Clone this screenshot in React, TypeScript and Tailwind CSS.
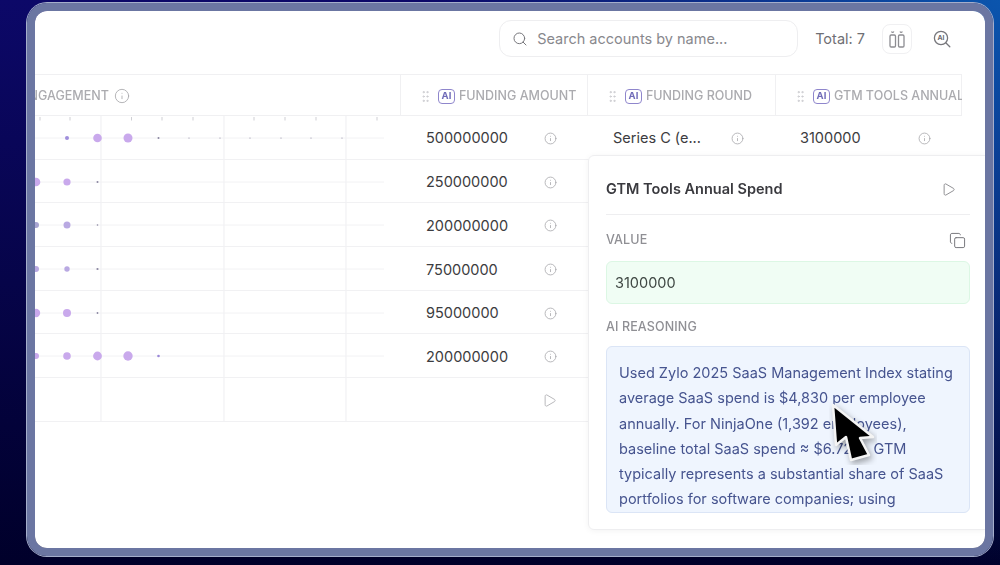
import React from 'react';
import { Search, Info, Play, Copy, GripVertical } from 'lucide-react';

type Dot = { x: number; r: number; c?: string };

const PURPLE = '#c9a9ec';
const LAVENDER = '#b9a9e2';
const DARK = '#8a86a0';

// x positions are measured from the left edge of the engagement column
const rows: { dots: Dot[]; value: string; extra?: boolean }[] = [
  {
    value: '500000000',
    extra: true,
    dots: [
      { x: 32, r: 2, c: '#a08fdc' },
      { x: 62.5, r: 4.3 },
      { x: 93, r: 4.5 },
      { x: 123.5, r: 1, c: DARK },
      { x: 154, r: 0.6, c: DARK },
      { x: 185, r: 0.6, c: DARK },
      { x: 215, r: 0.6, c: DARK },
      { x: 246, r: 0.6, c: DARK },
      { x: 276, r: 0.6, c: DARK },
      { x: 307, r: 0.6, c: DARK },
    ],
  },
  {
    value: '250000000',
    dots: [
      { x: 1, r: 4.3 },
      { x: 32, r: 3.6 },
      { x: 62.5, r: 1, c: DARK },
    ],
  },
  {
    value: '200000000',
    dots: [
      { x: 1, r: 3, c: '#a9a5d2' },
      { x: 32, r: 3.5, c: LAVENDER },
      { x: 62.5, r: 0.8, c: DARK },
    ],
  },
  {
    value: '75000000',
    dots: [
      { x: 1, r: 3, c: LAVENDER },
      { x: 32, r: 2.7, c: LAVENDER },
      { x: 62.5, r: 1.1, c: DARK },
    ],
  },
  {
    value: '95000000',
    dots: [
      { x: 1, r: 4.2 },
      { x: 32, r: 4 },
      { x: 62.5, r: 0.9, c: DARK },
    ],
  },
  {
    value: '200000000',
    dots: [
      { x: 1, r: 3 },
      { x: 32, r: 3.8 },
      { x: 62.5, r: 4.4 },
      { x: 93, r: 4.7 },
      { x: 123.5, r: 1.3, c: '#9a88d8' },
    ],
  },
];

const ticks = [5, 35, 96.5, 127, 158, 219, 250, 281, 342];

const GridLines = ({ line = true }: { line?: boolean }) => (
  <>
    {line && <line x1="0" y1="22" x2="349" y2="22" stroke="#f2f2f4" />}
    {[66, 189, 311].map((x) => (
      <line key={x} x1={x} y1="0" x2={x} y2="44" stroke="#f1f1f3" strokeWidth="1.2" />
    ))}
  </>
);

const Chart = ({ dots, showTicks }: { dots: Dot[]; showTicks?: boolean }) => (
  <svg width="365" height="43" viewBox="0 0 365 43" className="shrink-0">
    <GridLines />
    {showTicks &&
      ticks.map((x) => <line key={x} x1={x} y1="1" x2={x} y2="4.5" stroke="#cfcfd4" />)}
    {dots.map((d) => (
      <circle key={d.x} cx={d.x} cy="22" r={d.r} fill={d.c ?? PURPLE} />
    ))}
  </svg>
);

const AiBadge = () => (
  <span className="flex h-[15px] w-[17px] shrink-0 items-center justify-center rounded-[4px] border border-[#8f86cc] text-[9.5px] font-bold leading-none text-[#6f6ab8]">
    AI
  </span>
);

const HeaderCell = ({ label, className }: { label: string; className: string }) => (
  <div className={`flex h-full items-center overflow-hidden border-l border-[#f0f0f2] pl-[17px] pt-[2px] ${className}`}>
    <GripVertical size={15} strokeWidth={1.5} className="mr-[5px] shrink-0 text-[#c9c9cd]" />
    <AiBadge />
    <span className="ml-1 whitespace-nowrap text-[12.5px] font-medium text-[#ababaf]">
      {label}
    </span>
  </div>
);

const ValueCell = ({ value, className }: { value: string; className: string }) => (
  <div className={`flex items-center pt-[2px] ${className}`}>
    <span className="w-[118px] whitespace-nowrap text-[14.5px] text-[#3c3c40]">{value}</span>
    <Info size={13} strokeWidth={1.5} className="text-[#a9a9ad]" />
  </div>
);

const ColumnsIcon = () => (
  <svg width="16" height="18" viewBox="0 0 16 18" fill="none" stroke="#8d8d92" strokeWidth="1.3">
    <rect x="1" y="5" width="5.5" height="12" rx="1.2" />
    <rect x="9.5" y="5" width="5.5" height="12" rx="1.2" />
    <path d="M2.5 1.5c.6 1.2 1.6 1.2 2.4 0M11 1.5c.6 1.2 1.6 1.2 2.4 0" />
  </svg>
);

const AiSearchIcon = () => (
  <svg width="18" height="18" viewBox="0 0 18 18" fill="none" stroke="#77777c" strokeWidth="1.3">
    <circle cx="8" cy="8" r="6.6" />
    <path d="M13 13l3.8 3.8" strokeLinecap="round" />
    <text x="8" y="10.4" textAnchor="middle" fontSize="6.8" fontWeight="700" stroke="none" fill="#6a6a70" fontFamily="Inter, sans-serif">
      AI
    </text>
  </svg>
);

const Cursor = () => (
  <svg width="48" height="64" viewBox="-4 -4 48 64" className="blur-[0.7px]">
    <polygon
      points="0,0 3,40 13,32 18,55 36,50 27,33 40,32"
      fill="#000"
      stroke="#f4f4f4"
      strokeWidth="2.5"
      strokeLinejoin="round"
      className="drop-shadow-[2px_3px_3px_rgba(0,0,0,0.35)]"
    />
  </svg>
);

export default function App() {
  return (
    <div className="h-[565px] w-[1000px] overflow-hidden bg-[radial-gradient(circle_at_100%_0%,#0b55ad_0%,rgba(11,85,173,0)_50%),linear-gradient(180deg,#0c0868,#00002a)] pl-[27px] pt-[3px] font-['Inter',sans-serif]">
      <div className="h-[553px] w-[966px] rounded-[20px] border-[8px] border-[#6b76a2] shadow-[0_0_0_1px_#a5aecb]">
        <div className="relative h-full overflow-hidden rounded-[12px] bg-white blur-[0.35px]">
          {/* Toolbar */}
          <div className="flex h-[63px] items-center justify-end pb-[8px] pr-[34px]">
            <div className="mr-[17px] flex h-[37px] w-[299px] items-center gap-[9px] rounded-[12px] border border-[#eeeef0] pl-[12px]">
              <Search size={16} strokeWidth={1.5} className="text-[#77777c]" />
              <span className="text-[14.5px] text-[#88888d]">Search accounts by name...</span>
            </div>
            <span className="mr-[17px] text-[14.5px] text-[#6f6f74]">Total: 7</span>
            <div className="mr-[21px] flex h-[30px] w-[30px] items-center justify-center rounded-[8px] border border-[#f0f0f2]">
              <ColumnsIcon />
            </div>
            <AiSearchIcon />
          </div>

          {/* Table */}
          <div className="w-[927px]">
            <div className="box-content flex h-[40px] items-center border-y border-r border-[#f0f0f2]">
              <div className="flex w-[365px] shrink-0 items-center overflow-hidden pt-[2px]">
                <span className="-ml-[14px] whitespace-nowrap text-[12.5px] font-medium text-[#ababaf]">
                  ENGAGEMENT
                </span>
                <Info size={16} strokeWidth={1.3} className="ml-[5px] text-[#a9a9ad]" />
              </div>
              <HeaderCell label="FUNDING AMOUNT" className="w-[187px] shrink-0" />
              <HeaderCell label="FUNDING ROUND" className="w-[188px] shrink-0" />
              <HeaderCell label="GTM TOOLS ANNUAL..." className="w-[187px] shrink-0" />
            </div>
            {rows.map((r, i) => (
              <div key={i} className="flex h-[43.7px] items-center border-b border-[#f1f1f3]">
                <Chart dots={r.dots} showTicks={i === 0} />
                <ValueCell value={r.value} className="w-[187px] shrink-0 pl-[26px]" />
                {r.extra && (
                  <>
                    <ValueCell value="Series C (e..." className="w-[188px] shrink-0 pl-[26px]" />
                    <ValueCell value="3100000" className="w-[187px] shrink-0 pl-[25px]" />
                  </>
                )}
              </div>
            ))}
            <div className="flex h-[43.7px] items-center border-b border-[#f1f1f3]">
              <svg width="365" height="43" viewBox="0 0 365 43" className="shrink-0">
                <GridLines line={false} />
              </svg>
              <div className="w-[187px] shrink-0 pl-[142px] pt-[2px]">
                <Play size={15} strokeWidth={1.3} className="text-[#a9a9ad]" />
              </div>
            </div>
          </div>

          {/* Cell detail popover */}
          <div className="absolute left-[553px] top-[144px] h-[375px] w-[398px] rounded-l-[6px] border border-[#eeeef0] bg-white pl-[17px] pr-[15px] shadow-[0_1px_6px_rgba(0,0,0,0.05)]">
            <div className="flex h-[59px] items-center justify-between border-b border-[#eeeef0] pr-[14px] pt-[8px]">
              <span className="text-[14.5px] font-semibold text-[#3a3a3f]">GTM Tools Annual Spend</span>
              <Play size={15} strokeWidth={1.3} className="text-[#77777c]" />
            </div>
            <div className="flex h-[46px] items-center justify-between pr-[4px] pt-[4px]">
              <span className="text-[12.5px] font-medium tracking-[0.01em] text-[#8f8f94]">VALUE</span>
              <Copy size={17} strokeWidth={1.4} className="text-[#77777c]" />
            </div>
            <div className="flex h-[43px] items-center rounded-[6px] border border-[#dcf7e4] bg-[#f0fdf4] pl-[8px] text-[14.5px] text-[#3f4743]">
              3100000
            </div>
            <div className="flex h-[42px] items-center pt-[4px]">
              <span className="text-[12.5px] font-medium tracking-[0.01em] text-[#8f8f94]">AI REASONING</span>
            </div>
            <div className="h-[167px] overflow-hidden rounded-[6px] border border-[#dbe5f6] bg-[#eff5fe] pl-[12px] pr-[12px] pt-[13px] text-[14.5px] leading-[25.3px] text-[#46548f]">
              Used Zylo 2025 SaaS Management Index stating average SaaS spend is $4,830 per employee annually. For NinjaOne (1,392 employees), baseline total SaaS spend ≈ $6.72M. GTM typically represents a substantial share of SaaS portfolios for software companies; using
            </div>
          </div>

          <div className="absolute left-[794px] top-[390px]">
            <Cursor />
          </div>
        </div>
      </div>
    </div>
  );
}
